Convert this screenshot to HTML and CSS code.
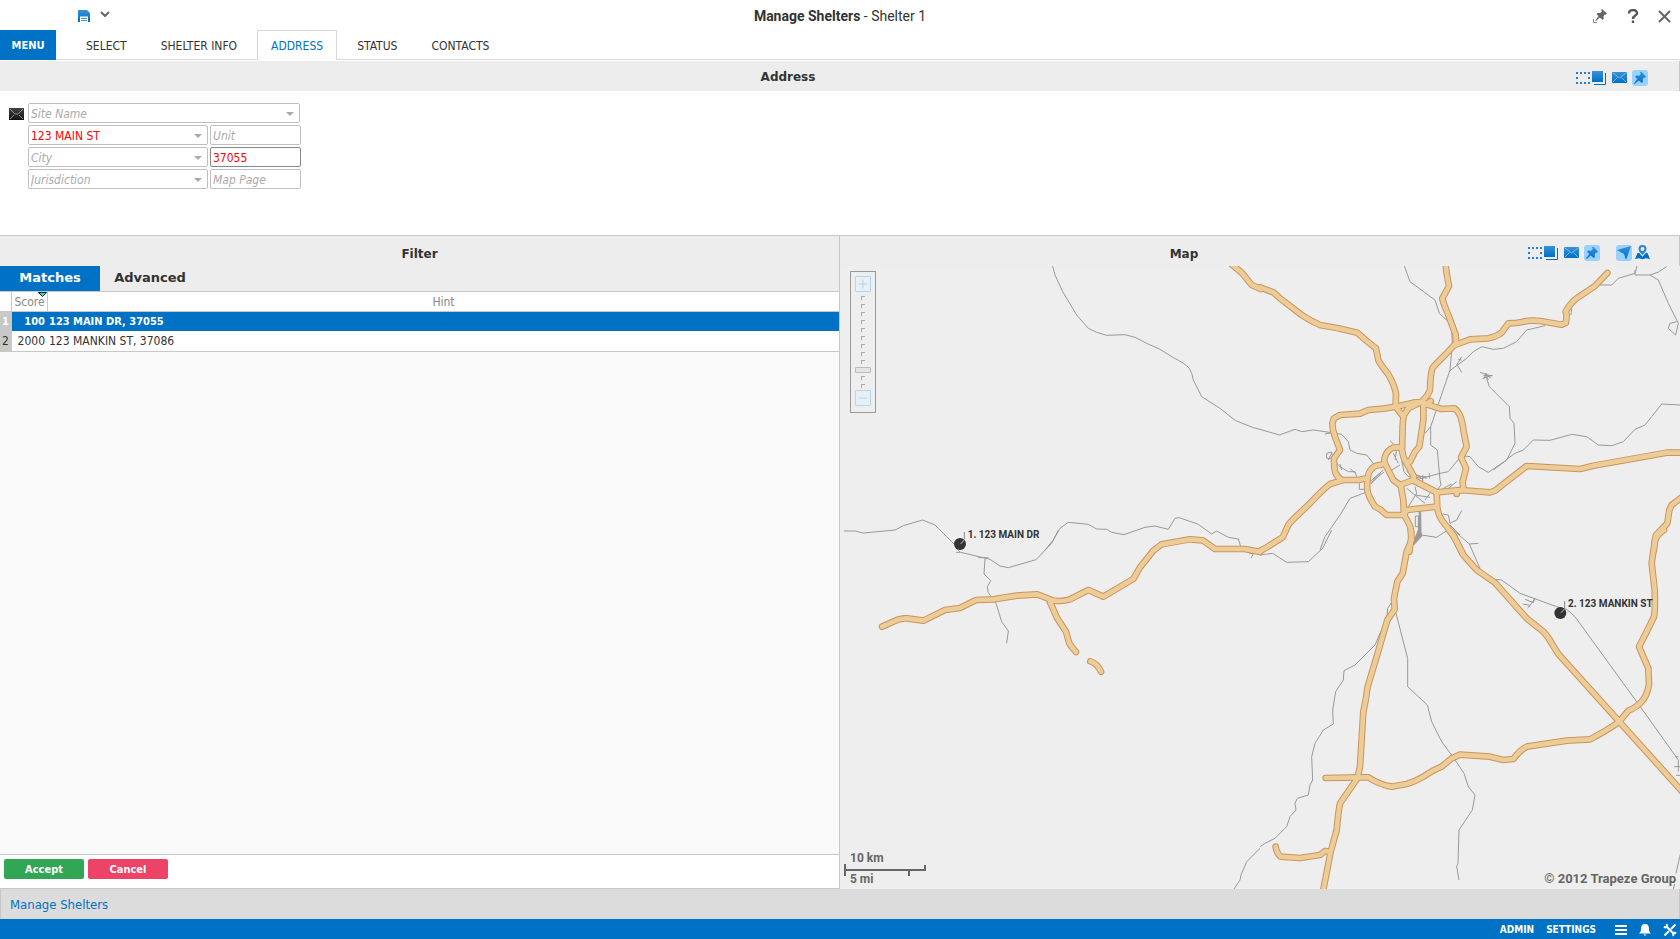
FILE: index.html
```html
<!DOCTYPE html>
<html lang="en">
<head>
<meta charset="utf-8">
<title>Manage Shelters - Shelter 1</title>
<link rel="stylesheet" href="styles.css">
</head>
<body>
<svg class="sprite" aria-hidden="true">
  <defs>
    <linearGradient id="blue" x1="0" y1="0" x2="0" y2="1"><stop offset="0" stop-color="#3a90d6"/><stop offset="1" stop-color="#0070c6"/></linearGradient>
    <linearGradient id="ink" x1="0" y1="0" x2="0" y2="1"><stop offset="0" stop-color="#444"/><stop offset="1" stop-color="#111"/></linearGradient>
    <symbol id="i-select" viewBox="0 0 30 14"><path d="M0 2h14M0 12h14" stroke="#1f7fce" stroke-width="2" stroke-dasharray="2 2"/><path d="M0 6h2v2H0zM12 6h2v2h-2z" fill="#1f7fce"/><path d="M16 0h11v11H16z" fill="url(#blue)"/><path d="M29.500 2v11.500H18" fill="none" stroke="#0070c6"/></symbol>
    <symbol id="i-mail" viewBox="0 0 15 11"><path d="M0 0h15v11H0z" fill="url(#blue)"/><path d="M.5.5l7 5.500 7-5.500M.5 10.500l5-5M14.500 10.500l-5-5" fill="none" stroke="#8cc4ee" stroke-width=".8"/></symbol>
    <symbol id="i-pin" viewBox="0 0 16 16"><path d="M9 1.500L14 6.500l-1 1.200-1-.2-1.300 1.800.2 2.700-1.100 1L6.700 10.500 2.700 14 2 13.500 5.200 9 3 6.500 4.200 5.500l2.800.2L9 4 8 2.800z"/></symbol>
    <symbol id="i-arrow" viewBox="0 0 16 16"><path d="M15 1L10 15 8 9 1 5z" fill="url(#blue)"/></symbol>
    <symbol id="i-mapuser" viewBox="0 0 15 15"><path d="M7.500 0a4 4 0 0 1 4 4c0 2-1.500 3.500-4 6-2.500-2.500-4-4-4-6a4 4 0 0 1 4-4zm0 2a2 2 0 1 0 0 4 2 2 0 0 0 0-4z" fill="#2a86d2" fill-rule="evenodd"/><path d="M2.500 8l1.500-.3 3.500 4 3.500-4 1.500.3 2.500 6-4-.8-3.500 1-3.500-1-4 .8z" fill="#0070c6"/></symbol>
  </defs>
</svg>
<header class="titlebar">
  <div class="quick">
    <button aria-label="Save"><svg width="12" height="12" viewBox="0 0 12 12"><path d="M0 0h9l3 3v9H0z" fill="url(#blue)"/><path d="M2 6.500h8V12H2z" fill="#fff"/><path d="M3 8h6v1H3zM3 10h6v1H3z" fill="#3a90d6"/></svg></button>
    <button class="more" aria-label="More actions"><svg width="10" height="6" viewBox="0 0 10 6"><path d="M1 1l4 4 4-4" fill="none" stroke="#666" stroke-width="2"/></svg></button>
  </div>
  <h1 class="title"><b>Manage Shelters</b> - Shelter 1</h1>
  <div class="window-tools">
    <button aria-label="Unpin"><svg width="16" height="16" viewBox="0 0 16 16" fill="#666"><path d="M10 1l5 4.500-1.200 1.200-1-.2-1.300 1.700.2 2.600-1.200 1L7.700 9.500 4 13 3.300 12.500 6.500 8 4.500 6.200l1-1.200 2.700.1L10 3.500 9.200 2z"/><path d="M1.500 11v3.500H5" fill="none" stroke="#888"/></svg></button>
    <button aria-label="Help"><svg width="12" height="14" viewBox="0 0 12 14"><path d="M2 4.500C2 0 10 0 10 4.200 10 6.800 6 6.500 6 10M6 11.500V14" fill="none" stroke="#555" stroke-width="2.400"/></svg></button>
    <button aria-label="Close"><svg width="13" height="13" viewBox="0 0 13 13"><path d="M1 1l11 11M12 1L1 12" fill="none" stroke="#666" stroke-width="2"/></svg></button>
  </div>
</header>
<nav class="tabs">
  <button class="menu">MENU</button>
  <a href="#select">SELECT</a>
  <a href="#info">SHELTER INFO</a>
  <a href="#address" class="current">ADDRESS</a>
  <a href="#status">STATUS</a>
  <a href="#contacts">CONTACTS</a>
</nav>
<main class="main">
  <section class="address">
    <div class="band">
      <h2>Address</h2>
      <div class="band-tools">
        <button aria-label="Layers"><svg width="30" height="14"><use href="#i-select"/></svg></button>
        <button aria-label="Mail"><svg width="15" height="11"><use href="#i-mail"/></svg></button>
        <button class="on" aria-label="Pin"><svg width="16" height="16" fill="url(#blue)"><use href="#i-pin"/></svg></button>
      </div>
    </div>
    <form class="form">
      <svg class="form-mail" width="15" height="12" viewBox="0 0 15 12"><path d="M0 0h15v12H0z" fill="url(#ink)"/><path d="M1 1l5 5h3l5-5M1 11l4-4M14 11l-4-4" fill="none" stroke="#aaa" stroke-width=".8"/></svg>
      <div class="fields">
        <div class="field combo wide"><input aria-label="Site Name" placeholder="Site Name"><button type="button" aria-label="Open site names"></button></div>
        <div class="field combo"><input class="error" aria-label="Street" value="123 MAIN ST"><button type="button" aria-label="Open streets"></button></div>
        <div class="field"><input aria-label="Unit" placeholder="Unit"></div>
        <div class="field combo"><input aria-label="City" placeholder="City"><button type="button" aria-label="Open cities"></button></div>
        <div class="field active"><input class="error" aria-label="Zip" value="37055"></div>
        <div class="field combo"><input aria-label="Jurisdiction" placeholder="Jurisdiction"><button type="button" aria-label="Open jurisdictions"></button></div>
        <div class="field"><input aria-label="Map Page" placeholder="Map Page"></div>
      </div>
    </form>
  </section>
  <div class="split">
    <section class="filter">
      <div class="band"><h2>Filter</h2></div>
      <div class="subtabs"><button class="current">Matches</button><button>Advanced</button></div>
      <table class="matches">
        <thead><tr><th class="num"></th><th class="score">Score<svg class="sort" width="9" height="5" viewBox="0 0 9 5"><path d="M.5.5h8l-4 4z" fill="#1ee" stroke="#111"/></svg></th><th>Hint</th></tr></thead>
        <tbody>
          <tr class="selected"><td class="num">1</td><td class="score">100</td><td>123 MAIN DR, 37055</td></tr>
          <tr><td class="num">2</td><td class="score">2000</td><td>123 MANKIN ST, 37086</td></tr>
        </tbody>
      </table>
      <div class="blank"></div>
      <div class="actions"><button class="accept">Accept</button><button class="cancel">Cancel</button></div>
    </section>
    <section class="map-pane">
      <div class="band">
        <h2>Map</h2>
        <div class="band-tools">
          <button aria-label="Layers"><svg width="30" height="14"><use href="#i-select"/></svg></button>
          <button aria-label="Mail"><svg width="15" height="11"><use href="#i-mail"/></svg></button>
          <button class="on" aria-label="Pin"><svg width="16" height="16" fill="url(#blue)"><use href="#i-pin"/></svg></button>
          <button class="on apart" aria-label="Locate"><svg width="16" height="16"><use href="#i-arrow"/></svg></button>
          <button class="tight" aria-label="Places"><svg width="15" height="15"><use href="#i-mapuser"/></svg></button>
        </div>
      </div>
      <div class="map">
        <svg class="map-art" viewBox="0 0 2520 1869" preserveAspectRatio="xMidYMid slice">
          <defs>
            <g id="roads">
              <path transform="translate(0 -18)" d="M1165 5L1205 38 1235 75 1262 87"/>
              <g transform="translate(1260 -18)">
                <path d="M0 82L40 97 60 115 125 165Q150 182 180 195L235 205 292 218 320 243 348 265 355 300Q362 315 385 343 403 375 408 400L407 440 430 470"/>
                <path d="M555 0L560 40 567 78 547 115Q548 125 565 165L587 225 588 250 555 285Q522 317 517 325 511 345 510 390 505 405 485 425L445 445 432 465Q428 480 428 500L426 570Q428 592 440 610L462 650 460 662 530 697 532 745Q535 765 545 780L580 825 607 880"/>
                <path d="M585 255L630 238 685 235Q710 230 725 218L745 190Q770 190 790 185 810 180 840 183L905 194 918 188 920 165 917 155Q930 130 950 115L1005 78 1042 39"/>
                <path d="M512 423L500 432Q480 425 460 428L408 440 370 446 325 450 300 461 240 465 222 475 217 490Q217 510 225 530L240 570 222 595Q222 620 225 635 230 650 245 660L295 660 320 655"/>
                <path d="M490 430L545 447 583 445Q597 455 603 475 610 500 610 510L620 560 603 592 618 625 608 665 610 690 590 692 590 702"/>
                <path d="M490 432L490 480 478 560 465 575 450 605 440 608"/>
                <path d="M426 562L400 563Q382 570 375 590 370 600 377 615L400 660 420 675 460 660 530 697 600 690 690 697 705 692 800 618 960 627 1000 617 1220 578 1265 578"/>
                <path d="M373 612L345 618Q328 630 325 645 320 665 322 690 325 710 345 740L360 748 380 765 432 765 430 720 422 675M432 765L440 750 530 740"/>
                <path d="M432 765Q448 790 452 805 457 820 448 875"/>
                <path d="M245 662L210 672Q185 692 150 730L110 768Q92 785 85 795L68 832 20 862 0 873"/>
                <path d="M1265 712L1235 735 1228 750 1222 790 1188 825Q1182 845 1182 870"/>
              </g>
              <g transform="translate(0 792)">
                <path d="M126 290L160 275Q180 264 200 265L250 272 315 240 360 234 408 210 460 208 530 197 592 193 640 212Q670 215 690 208L745 180 790 200 880 147 900 112 940 62 965 43 1050 28 1088 31 1125 57 1215 57 1260 66"/>
                <path d="M630 217Q637 230 650 262L678 305Q685 330 688 340 698 355 708 366M751 394Q772 400 783 425"/>
              </g>
              <g transform="translate(1260 792)">
                <path d="M452 0L455 30 440 65 428 130 412 155 402 205 404 238 382 270 350 380 323 470Q318 510 310 545L306 610 300 710 292 745 240 820Q235 845 230 900L212 965 188 1090"/>
                <path d="M567 0Q580 15 590 35L610 75 650 120 705 158 800 265 850 305Q865 320 878 345L895 372 1078 575 1265 783"/>
                <path d="M1212 0Q1190 15 1186 30 1180 60 1175 100L1184 180Q1186 240 1182 260L1160 305 1137 350 1165 415 1167 465Q1160 500 1145 515 1130 532 1105 542L1078 575Q1040 602 990 628L920 632 800 650Q780 660 760 687L730 690 690 680 600 674 575 685 545 710Q520 720 490 740 465 755 440 762L395 770Q360 765 325 742L300 742 197 744"/>
                <path d="M47 950Q50 970 62 980L120 984 180 975 195 963 205 965"/>
              </g>
            </g>
          </defs>
          <g class="rails">
            <g transform="translate(0 -18)">
              <path d="M637 15L645 45 668 95 710 165 745 205 770 217 800 226 855 224 885 232 920 250 960 268 1000 293Q1035 310 1048 325 1057 340 1060 360L1085 410 1140 445 1187 482 1240 503 1260 508"/>
              <path d="M12 813L45 813 70 819 165 810 190 797 248 780 285 795 342 852"/>
              <path d="M615 870L640 840 660 805 685 787 745 793 770 807 800 808 815 817 852 824 915 802 945 798 985 808 1005 775 1018 773 1075 793 1115 822 1130 813 1165 832 1195 837 1202 860"/>
            </g>
            <g transform="translate(1260 -18)">
              <path d="M0 508L58 525 105 508 125 515 160 510 215 518M195 522L215 518 245 523 265 545 270 570 290 580 320 585 340 610 325 640"/>
              <path d="M180 870L195 830 240 765 270 715 315 698M298 670V688H318M215 595L200 595 200 580 215 576M205 600L215 580M215 576L220 600 240 620 265 635 285 635 290 650M240 612L245 630M270 625L285 640"/>
              <path d="M432 15L450 65 525 120 538 160 565 185M575 210L577 250 570 330 512 500 512 555 532 570 540 660 543 675 520 705"/>
              <path d="M512 500L495 520M855 197L800 210 770 245 730 265 700 268 665 260 640 275 620 295 570 332M590 312L605 337M595 298L605 300M590 315L605 290"/>
              <path d="M660 337L690 347M668 355L695 347M675 340L692 355M680 340L672 356M670 347H698M677 342L685 360M680 355L688 380 748 440 750 475 762 490 765 550 740 600 685 637 655 620 630 590 612 588"/>
              <path d="M740 598L765 580 790 570 820 540 870 541 935 523 980 530 1015 555 1055 557 1090 545 1125 508 1155 495 1175 470 1205 432 1260 435M700 630L740 600"/>
              <path d="M1020 75L1055 75 1075 55 1125 40 1132 15M1125 30V45L1170 45Q1195 40 1220 20M1170 45L1195 60 1225 130 1255 190 1247 225 1225 205 1230 190 1250 185M935 145L933 165"/>
              <path d="M390 542L420 570M400 580L415 610M410 570L405 600M425 600L432 635 445 650 485 655 540 640 565 635 600 592M395 630L420 615M440 635L500 655M488 645V665M508 640V655M465 680L470 700 445 740M440 685L495 730M465 705L510 712M495 720L510 700M565 685L590 665M550 685L575 672M330 665L370 630M333 668L372 636M336 660L362 640M332 672L352 652M470 645L490 660M475 650H500"/>
              <path d="M466 768V800H475V768ZM548 762L565 765 570 790M570 790L590 780 605 752M485 825L530 832 555 815 580 810"/>
              <path d="M478 755L482 755 483 818 486 828 460 856 464 838 475 810Z" fill="#999"/>
            </g>
            <g transform="translate(0 792)">
              <path d="M348 67L362 67 430 83 450 88 480 108 505 113 588 89 635 40 655 0M352 58L360 66M1225 68L1240 72 1233 84"/>
              <path d="M415 83H445M435 85L432 132 452 152 442 170 445 188 468 220 485 275 505 303 500 340"/>
              <path d="M1260 955L1220 995 1203 1035 1200 1050 1182 1077"/>
            </g>
            <g transform="translate(1260 792)">
              <path d="M0 950L15 940 45 925 80 890 90 860 108 840 105 820 112 805 145 795 150 765 158 750 155 680 165 640 190 600 220 582 218 540 227 485 250 450 252 422 285 405 345 345 360 310 380 270 383 235 400 210"/>
              <path d="M408 250L443 385 443 470 502 525 515 575 545 635 582 685 612 730 625 770 645 795 637 840 597 900 594 1000 590 1010 597 1050"/>
              <path d="M0 75L38 70 80 97 145 95 188 55 215 0M580 0L628 42 655 40M628 42L660 115M570 -15L600 15"/>
              <path d="M700 148L725 150 780 190 890 230 920 238 945 260 1090 460 1130 515 1255 690V725M788 222L810 226 803 235M795 208L820 218 825 205 810 226M1245 680H1255M1243 710H1260M1248 736H1260M1262 968L1248 1030M1244 1062L1240 1077"/>
            </g>
          </g>
          <use class="road-edge" href="#roads"/>
          <use class="road-fill" href="#roads"/>
          <g class="marker" transform="translate(360 834)"><circle r="18"/><path d="M1 0L13 -14V-36M4 -1L13 -12" /><text x="23" y="-17">1. 123 MAIN DR</text></g>
          <g class="marker" transform="translate(2161 1041)"><circle r="18"/><path d="M1 0L13 -14V-36M4 -1L13 -12" /><text x="23" y="-17">2. 123 MANKIN ST</text></g>
        </svg>
        <div class="zoom">
          <button aria-label="Zoom in"><svg width="16" height="16" viewBox="0 0 16 16"><path d="M8 3v10M3 8h10"/></svg></button>
          <div class="ticks"><i></i><i></i><i></i><i></i><i></i><i></i><i></i><i></i><i></i><b></b><i></i><i></i></div>
          <button aria-label="Zoom out"><svg width="16" height="16" viewBox="0 0 16 16"><path d="M3 8h10"/></svg></button>
        </div>
        <div class="scale"><span>10 km</span><svg width="82" height="12" viewBox="0 0 82 12"><path d="M1 0v12M0 6h82M81 1v6M65 6v6" fill="none" stroke="#666" stroke-width="2"/></svg><span>5 mi</span></div>
        <div class="credit">© 2012 Trapeze Group</div>
      </div>
    </section>
  </div>
</main>
<div class="crumbs"><a href="#manage">Manage Shelters</a></div>
<footer class="footer">
  <a href="#admin">ADMIN</a>
  <a href="#settings">SETTINGS</a>
  <button class="list" aria-label="List"><svg width="12" height="10" viewBox="0 0 12 10"><path d="M0 1h12M0 5h12M0 9h12" stroke="#fff" stroke-width="2"/></svg></button>
  <button aria-label="Alerts"><svg width="12" height="12" viewBox="0 0 12 12" fill="#fff"><path d="M6 0c3 0 4 2 4 5 0 2 .5 3 2 4.500H0C1.500 8 2 7 2 5c0-3 1-5 4-5zM4.500 10.500h3C7 12 5 12 4.500 10.500z"/></svg></button>
  <button aria-label="Tools"><svg width="14" height="14" viewBox="0 0 14 14" fill="none" stroke="#fff"><path d="M3.500 3.500l7 7" stroke-width="2"/><path d="M1 3.500c2 2 4 0 2.500-2.500M10.500 13c-1-2 1-4 2.500-2.500" stroke-width="2"/><path d="M12.500 1.500L8 6M6 8l-4.500 4.500" stroke-width="2"/></svg></button>
</footer>
</body>
</html>
```
FILE: styles.css
```css
* { box-sizing: border-box; }
html, body { height: 100%; }
body {
  margin: 0;
  display: flex;
  flex-direction: column;
  background: #fff;
  color: #333;
  font: 12px/16px "DejaVu Sans Condensed", "Noto Sans", sans-serif;
}
button { margin: 0; padding: 0; border: 0; background: none; font: inherit; color: inherit; display: flex; align-items: center; justify-content: center; }
a { color: inherit; text-decoration: none; }
svg { display: block; }
h1, h2 { margin: 0; }
.sprite { position: absolute; width: 0; height: 0; }

.titlebar { flex: none; height: 30px; padding-top: 2px; display: grid; grid-template-columns: 1fr auto 1fr; align-items: center; }
.quick { display: flex; align-items: center; gap: 10px; padding-left: 78px; }
.more { padding-bottom: 4px; }
.title { font: 14px/16px Roboto, sans-serif; }
.window-tools { display: flex; align-items: center; justify-content: flex-end; gap: 19px; padding-right: 9px; }

.tabs { flex: none; height: 30px; display: flex; gap: 6px; border-bottom: 1px solid #d8d8d8; }
.tabs .menu { height: 30px; width: 56px; padding-top: 1px; background: #0072c6; color: #fff; font-weight: bold; font-size: 11px; margin-right: 10px; }
.tabs a { height: 30px; padding: 7px 13px 0; border: 1px solid transparent; border-bottom: 0; }
.tabs a.current { color: #0072c6; border-color: #d8d8d8; background: #fff; }

.main { flex: 1; min-height: 0; display: flex; flex-direction: column; padding-top: 1px; }
.band { flex: none; height: 30px; background: #ededed; border-right: 1px solid #c8c8c8; display: flex; align-items: center; }
.band h2 { flex: 1; padding-top: 2px; text-align: center; font: bold 12px/16px "DejaVu Sans", sans-serif; }
.split .band h2 { padding-top: 5px; }
.band-tools { display: flex; align-items: center; gap: 6px; padding: 3px 31px 0 0; }
.map-pane .band-tools { padding-right: 29px; }
.band-tools .on { margin-left: -1px; background: #99d1ff; border-radius: 3px; }
.band-tools .apart { margin-left: 10px; }
.band-tools .tight { margin-left: -3px; }

.form { display: flex; gap: 4px; padding: 12px 9px 46px; }
.form-mail { margin-top: 5px; }
.fields { display: grid; grid-template-columns: 180px 91px; gap: 2px; }
.field { height: 20px; display: flex; border: 1px solid #c0c0c0; border-radius: 2px; }
.field.wide { grid-column: 1 / 3; margin-right: 1px; }
.field.active { border-color: #888; }
.field input { flex: 1; min-width: 0; border: 0; outline: 0; padding: 2px 2px 0; background: none; font: inherit; color: #333; }
.field input.error { color: #f00; }
.field input::placeholder { color: #aaa; font-style: italic; opacity: 1; }
.combo button { width: 19px; padding-top: 1px; }
.combo button::after { content: ""; border: 4px solid transparent; border-top-color: #aaa; border-bottom: 0; }

.split { flex: 1; min-height: 0; display: grid; grid-template-columns: 1fr 1fr; border-top: 1px solid #c8c8c8; }
.filter { display: flex; flex-direction: column; border-right: 1px solid #c8c8c8; min-height: 0; }
.filter .band { border-right: 0; }
.subtabs { flex: none; height: 26px; display: flex; background: #ededed; border-bottom: 1px solid #c8c8c8; font: bold 13px/16px "DejaVu Sans", sans-serif; }
.subtabs button { width: 100px; height: 25px; padding-bottom: 1px; }
.subtabs .current { background: #0072c6; color: #fff; }

.matches { width: 100%; table-layout: fixed; border-collapse: separate; border-spacing: 0; border-bottom: 1px solid #c8c8c8; }
.matches th { height: 20px; padding: 0; font-weight: normal; color: #888; border-bottom: 1px solid #c8c8c8; }
.matches th.num { width: 12px; border-right: 1px solid #c8c8c8; }
.matches th.score { width: 36px; position: relative; border-right: 1px solid #c8c8c8; }
.sort { position: absolute; right: 0; top: 0; }
.matches td { height: 20px; padding: 0 1px; }
.matches .selected td { height: 19px; padding-top: 1px; background: #0072c6; color: #fff; font-weight: bold; font-size: 11px; }
.matches td.num, .matches .selected td.num { background: #c8c8c8; padding-left: 2px; border-right: 1px solid #c8c8c8; }
.matches td.score { text-align: right; padding-right: 3px; }
.blank { flex: 1; background: #f9f9f9; }
.actions { flex: none; height: 35px; display: flex; gap: 4px; padding: 4px; border-top: 1px solid #c8c8c8; border-bottom: 1px solid #c8c8c8; }
.actions button { width: 80px; height: 20px; padding-top: 2px; border-radius: 2px; color: #fff; font-weight: bold; font-size: 11px; }
.actions .accept { background: #31a654; }
.actions .cancel { background: #ed4367; }

.map-pane { display: flex; flex-direction: column; min-height: 0; }
.map { flex: 1; min-height: 0; position: relative; overflow: hidden; background: #eee; }
.map-art { width: 100%; height: 100%; }
.rails { fill: none; stroke: #999; stroke-width: 3; stroke-linejoin: round; }
.road-edge, .road-fill { fill: none; stroke-linecap: round; stroke-linejoin: round; }
.road-edge { stroke: #cc935c; stroke-width: 20; }
.road-fill { stroke: #eccd98; stroke-width: 14; }
.marker circle { fill: #333; }
.marker path { fill: none; stroke: #888; stroke-width: 3; }
.marker text { fill: #333; font: bold 30px Roboto, sans-serif; }
.zoom { position: absolute; left: 10px; top: 5px; width: 26px; border: 1px solid #999; padding: 4px 0 6px; display: flex; flex-direction: column; align-items: center; }
.zoom button { width: 16px; height: 16px; border: 1px solid #b4d5ee; background: #e8eff5; border-radius: 1px; }
.zoom path { stroke: #aed0ea; fill: none; }
.ticks { display: flex; flex-direction: column; align-items: center; gap: 4px; padding: 4px 0 2px; }
.ticks i { width: 4px; height: 4px; border: 1px solid #aaa; border-right: 0; border-bottom: 0; }
.ticks b { width: 16px; height: 6px; margin: -1px 0; border: 1px solid #bbb; background: #e4e4e4; border-radius: 1px; }
.scale { position: absolute; left: 4px; bottom: 4px; color: #666; font: bold 12px/12px Roboto, sans-serif; }
.scale span { display: block; padding-left: 6px; }
.scale svg { margin-bottom: -3px; }
.credit { position: absolute; right: 4px; bottom: 2px; color: #666; font: bold 13px/16px Roboto, sans-serif; }

.crumbs { flex: none; height: 30px; padding: 8px 9px 6px; background: #dcdcdc; border-left: 1px solid #c8c8c8; border-right: 1px solid #c8c8c8; color: #0072c6; font-size: 13px; }
.footer { flex: none; height: 20px; display: flex; align-items: center; justify-content: flex-end; gap: 12px; padding: 1px 3px 0 0; background: #0072c6; color: #fff; font-weight: bold; font-size: 10px; }
.footer .list { margin-left: 7px; }
```
